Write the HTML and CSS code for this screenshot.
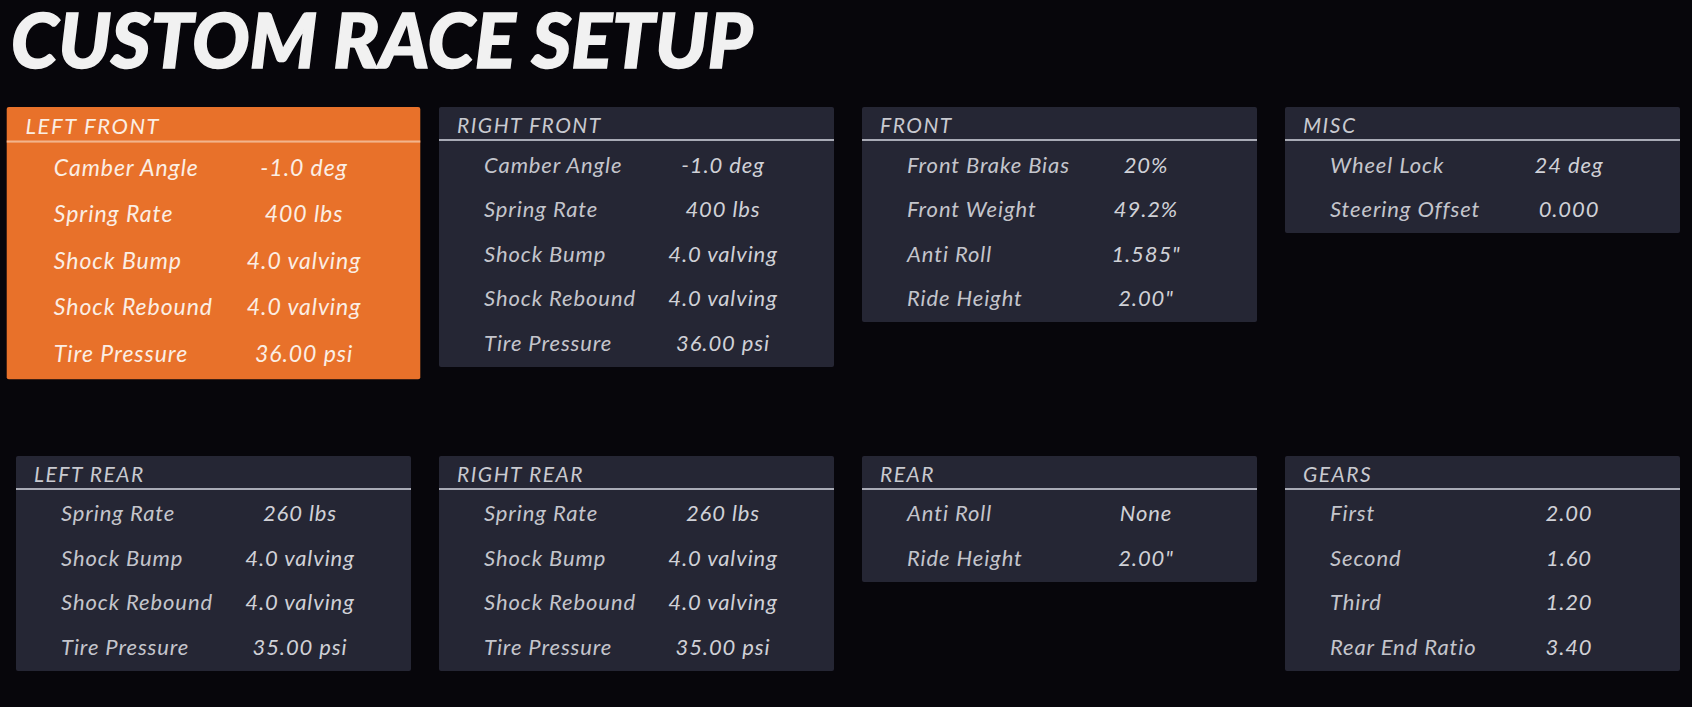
FILE: index.html
```html
<!DOCTYPE html>
<html lang="en">
<head>
    <meta charset="UTF-8">
    <title>Custom Race Setup</title>
    <link rel="stylesheet" href="styles.css">
</head>
<body>
    <h1 class="title">CUSTOM RACE SETUP</h1>

    <main class="grid">
        <section class="panel selected">
            <h2>LEFT FRONT</h2>
            <div class="row"><span>Camber Angle</span><b>-1.0 deg</b></div>
            <div class="row"><span>Spring Rate</span><b>400 lbs</b></div>
            <div class="row"><span>Shock Bump</span><b>4.0 valving</b></div>
            <div class="row"><span>Shock Rebound</span><b>4.0 valving</b></div>
            <div class="row"><span>Tire Pressure</span><b>36.00 psi</b></div>
        </section>

        <section class="panel">
            <h2>RIGHT FRONT</h2>
            <div class="row"><span>Camber Angle</span><b>-1.0 deg</b></div>
            <div class="row"><span>Spring Rate</span><b>400 lbs</b></div>
            <div class="row"><span>Shock Bump</span><b>4.0 valving</b></div>
            <div class="row"><span>Shock Rebound</span><b>4.0 valving</b></div>
            <div class="row"><span>Tire Pressure</span><b>36.00 psi</b></div>
        </section>

        <section class="panel">
            <h2>FRONT</h2>
            <div class="row"><span>Front Brake Bias</span><b>20%</b></div>
            <div class="row"><span>Front Weight</span><b>49.2%</b></div>
            <div class="row"><span>Anti Roll</span><b>1.585"</b></div>
            <div class="row"><span>Ride Height</span><b>2.00"</b></div>
        </section>

        <section class="panel">
            <h2>MISC</h2>
            <div class="row"><span>Wheel Lock</span><b>24 deg</b></div>
            <div class="row"><span>Steering Offset</span><b>0.000</b></div>
        </section>

        <section class="panel">
            <h2>LEFT REAR</h2>
            <div class="row"><span>Spring Rate</span><b>260 lbs</b></div>
            <div class="row"><span>Shock Bump</span><b>4.0 valving</b></div>
            <div class="row"><span>Shock Rebound</span><b>4.0 valving</b></div>
            <div class="row"><span>Tire Pressure</span><b>35.00 psi</b></div>
        </section>

        <section class="panel">
            <h2>RIGHT REAR</h2>
            <div class="row"><span>Spring Rate</span><b>260 lbs</b></div>
            <div class="row"><span>Shock Bump</span><b>4.0 valving</b></div>
            <div class="row"><span>Shock Rebound</span><b>4.0 valving</b></div>
            <div class="row"><span>Tire Pressure</span><b>35.00 psi</b></div>
        </section>

        <section class="panel">
            <h2>REAR</h2>
            <div class="row"><span>Anti Roll</span><b>None</b></div>
            <div class="row"><span>Ride Height</span><b>2.00"</b></div>
        </section>

        <section class="panel">
            <h2>GEARS</h2>
            <div class="row"><span>First</span><b>2.00</b></div>
            <div class="row"><span>Second</span><b>1.60</b></div>
            <div class="row"><span>Third</span><b>1.20</b></div>
            <div class="row"><span>Rear End Ratio</span><b>3.40</b></div>
        </section>
    </main>
</body>
</html>
```

FILE: styles.css
```css
body {
    margin: 0;
    padding: 0;
    background-color: #07060b;
    color: #c9cad1;
    font-family: 'Lato', 'Liberation Sans', sans-serif;
}
.title {
    margin: 0;
    padding: 0 0 0 11px;
    font-family: 'Lato', sans-serif;
    font-weight: 900;
    font-style: italic;
    font-size: 76px;
    line-height: 78px;
    letter-spacing: 0.1px;
    color: #f1f1f1;
    -webkit-text-stroke: 1.5px #f1f1f1; /* daha kalın görünüm */
}
.grid {
    display: grid;
    grid-template-columns: repeat(4, 395px);
    column-gap: 28px;
    row-gap: 89px;
    align-items: start;
    padding: 29px 0 0 16px;
}
.panel {
    background-color: #252634;
    border-radius: 2px;
    padding-bottom: 2px;
}
.panel h2 {
    margin: 0;
    height: 32px;
    padding-left: 18px;
    font-size: 21px;
    font-weight: 400;
    font-style: italic;
    letter-spacing: 1.5px;
    line-height: 35px;
    color: #c9cad0;
    border-bottom: 2px solid #a9abb6;
}
.panel .row {
    display: grid;
    grid-template-columns: 159px 160px;
    align-items: center;
    height: 44.5px;
    padding-left: 45px;
    font-size: 22px;
    font-style: italic;
    letter-spacing: 0.9px;
}
.panel .row:first-of-type {
    margin-top: 1px;
}
.row span {
    color: #c4c5cc;
    white-space: nowrap;
}
.row b {
    font-weight: 400;
    text-align: center;
    color: #d0d1d7;
}
/* kart seçili - turuncu ve biraz büyük */
.panel.selected {
    background-color: #e8712a;
    transform: scale(1.047);
    transform-origin: top center;
}
.panel.selected h2 {
    color: #fbeee4;
    border-bottom-color: #f2b48c;
}
.panel.selected .row span,
.panel.selected .row b {
    color: #fbeee4;
}
```
